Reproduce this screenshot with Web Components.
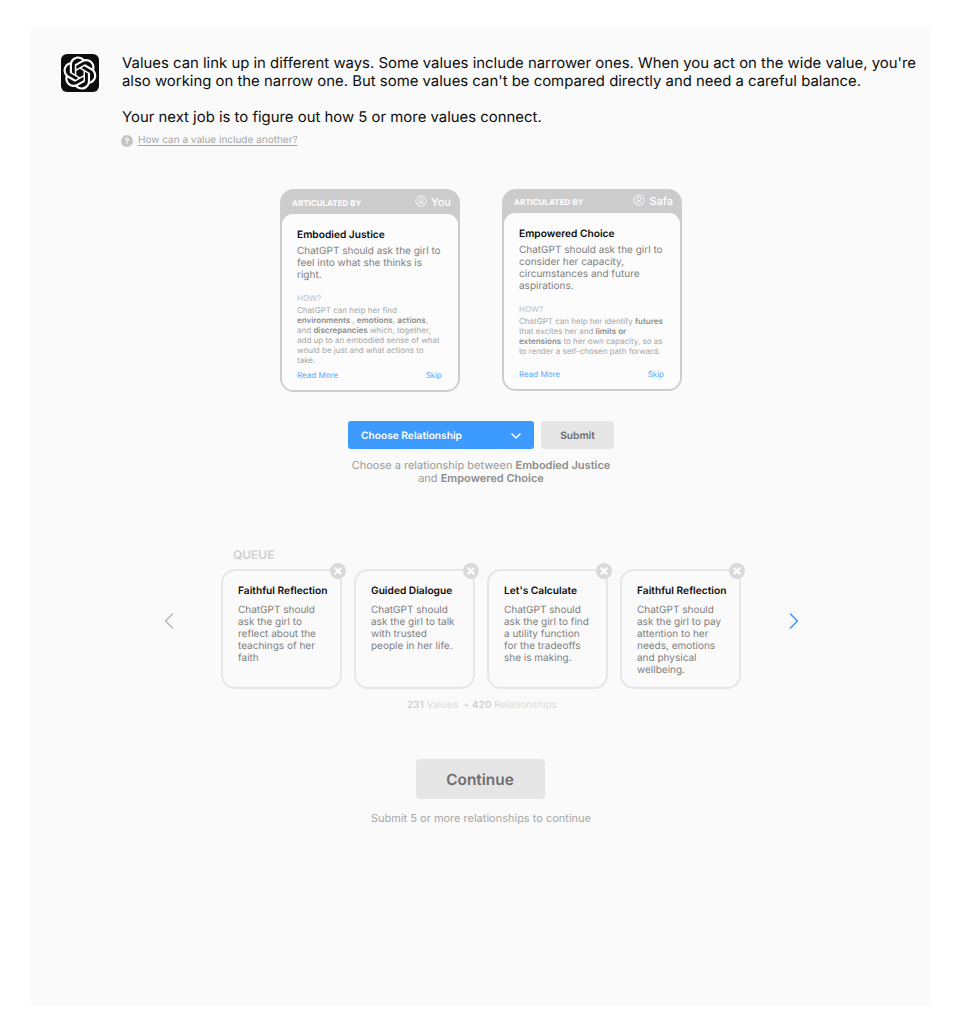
<!DOCTYPE html>
<html>
<head>
<meta charset="utf-8">
<title>Values</title>
<style>
* { box-sizing: border-box; }
html, body { margin: 0; padding: 0; background: #fff; }
body { font-family: Inter, "Liberation Sans", sans-serif; text-rendering: geometricPrecision; }
</style>
</head>
<body>
<values-page></values-page>

<script>
const valueCardTemplate = document.createElement('template')
valueCardTemplate.innerHTML = `
<style>
* { box-sizing: border-box; }
:host {
	display: block;
	width: 180px;
	background: #cccccc;
	border: 2px solid #cccccc;
	border-radius: 14px;
}
.head {
	display: flex;
	align-items: center;
	justify-content: space-between;
	height: var(--head-height, 23px);
	padding: 0 7px 2px 10px;
	color: #fff;
}
.by { margin-top: 2px; font-size: 8px; font-weight: 700; }
.who { display: flex; align-items: center; gap: 4px; font-size: 11px; font-weight: 500; }
.who svg { display: block; width: 12px; height: 12px; margin-top: -2px; }
.body {
	display: flex;
	flex-direction: column;
	background: #fcfcfc;
	border-radius: 11px;
	padding: 15px 16px 9px 15px;
	height: var(--body-height, 176px);
}
.title { font-size: 10.2px; font-weight: 600; line-height: 13px; color: #0d0d0d; }
.desc { margin-top: 3px; font-size: 10px; line-height: 12px; color: #808080; }
.how-label { margin-top: 12px; font-size: 8px; font-weight: 500; line-height: 11px; color: #c8c8c8; }
.how { margin-top: 1px; font-size: 8px; line-height: 10px; color: #a6a6a6; }
.links { margin-top: auto; display: flex; justify-content: space-between; font-size: 8px; line-height: 11px; color: #5aa9ff; }
</style>
<div class="head">
	<span class="by">ARTICULATED BY</span>
	<span class="who">
		<svg viewBox="0 0 24 24" fill="none" stroke="#fff" stroke-width="1.6">
			<circle cx="12" cy="12" r="10.5"/>
			<circle cx="12" cy="9.5" r="4"/>
			<path d="M5 19.5c1.5-3 4-4.2 7-4.2s5.500 1.200 7 4.200"/>
		</svg>
		<span class="name"></span>
	</span>
</div>
<div class="body">
	<div class="title"><slot name="title"></slot></div>
	<div class="desc"><slot name="desc"></slot></div>
	<div class="how-label">HOW?</div>
	<div class="how"><slot name="how"></slot></div>
	<div class="links"><span>Read More</span><span>Skip</span></div>
</div>
`
class ValueCard extends HTMLElement {
	constructor() {
		super()
		this.attachShadow({ mode: 'open' })
		this.shadowRoot.appendChild(valueCardTemplate.content.cloneNode(true))
		this.shadowRoot.querySelector('.name').textContent = this.getAttribute('author')
	}
}
customElements.define('value-card', ValueCard)

const queueCardTemplate = document.createElement('template')
queueCardTemplate.innerHTML = `
<style>
* { box-sizing: border-box; }
:host {
	display: block;
	position: relative;
	width: 121px;
	height: 120px;
	border: 2px solid #e6e6e6;
	border-radius: 14px;
	padding: 14px 15px 0 15px;
}
.title { font-size: 10.2px; font-weight: 600; line-height: 13px; color: #0d0d0d; white-space: nowrap; }
.desc { margin-top: 6px; font-size: 10px; line-height: 12px; color: #808080; }
.close {
	position: absolute;
	top: -8px;
	right: -6px;
	width: 16px;
	height: 16px;
	border-radius: 50%;
	background: #d9d9d9;
}
.close svg { display: block; width: 16px; height: 16px; }
</style>
<div class="title"><slot name="title"></slot></div>
<div class="desc"><slot></slot></div>
<div class="close">
	<svg viewBox="0 0 16 16" fill="none" stroke="#fff" stroke-width="2" stroke-linecap="round"><path d="M5.200 5.200l5.600 5.600M10.800 5.200l-5.600 5.600"/></svg>
</div>
`
class QueueCard extends HTMLElement {
	constructor() {
		super()
		this.attachShadow({ mode: 'open' })
		this.shadowRoot.appendChild(queueCardTemplate.content.cloneNode(true))
	}
}
customElements.define('queue-card', QueueCard)

const grayButtonTemplate = document.createElement('template')
grayButtonTemplate.innerHTML = `
<style>
:host {
	display: flex;
	align-items: center;
	justify-content: center;
	background: #e6e6e6;
	border-radius: 4px;
	color: #6e6e6e;
	font-weight: 600;
}
</style>
<slot></slot>
`
class GrayButton extends HTMLElement {
	constructor() {
		super()
		this.attachShadow({ mode: 'open' })
		this.shadowRoot.appendChild(grayButtonTemplate.content.cloneNode(true))
	}
}
customElements.define('gray-button', GrayButton)

const relationSelectTemplate = document.createElement('template')
relationSelectTemplate.innerHTML = `
<style>
:host {
	display: flex;
	align-items: center;
	justify-content: space-between;
	width: 186px;
	height: 28px;
	padding: 2px 13px 0;
	background: #3d9bff;
	border-radius: 3px;
	color: #fff;
	font-size: 10.2px;
	font-weight: 600;
}
svg { display: block; width: 10px; height: 6px; }
</style>
<slot></slot>
<svg viewBox="0 0 10 6" fill="none" stroke="#fff" stroke-width="1.500" stroke-linecap="round" stroke-linejoin="round"><path d="M1 1l4 4 4-4"/></svg>
`
class RelationSelect extends HTMLElement {
	constructor() {
		super()
		this.attachShadow({ mode: 'open' })
		this.shadowRoot.appendChild(relationSelectTemplate.content.cloneNode(true))
	}
}
customElements.define('relation-select', RelationSelect)

const pageTemplate = document.createElement('template')
pageTemplate.innerHTML = `
<style>
* { box-sizing: border-box; }
:host { display: block; height: 1033px; padding: 27px 31px; background: #fff; }
.panel { height: 979px; background: #fafafa; display: flex; flex-direction: column; }
.intro { display: flex; padding: 27px 14px 0 30px; }
.logo { flex: none; width: 38px; height: 38px; background: #0d0d0d; border-radius: 6px; display: flex; align-items: center; justify-content: center; }
.logo svg { display: block; width: 34px; height: 34px; }
.copy { margin-left: 23px; color: #0d0d0d; font-size: 14.9px; line-height: 18px; }
.copy p { margin: 0 0 18px; }
.copy p:last-of-type { margin: 0; }
.help { display: flex; align-items: center; gap: 5px; margin: 7px 0 0 -1px; font-size: 10px; line-height: 15px; color: #a6a6a6; }
.help span { text-decoration: underline; text-underline-offset: 2px; }
.help svg { display: block; width: 12px; height: 12px; }
.cards { display: flex; justify-content: center; align-items: flex-start; gap: 42px; margin: 41px 0 0; }
.actions { display: flex; justify-content: center; gap: 7px; margin-top: 29px; }
.actions gray-button { width: 73px; padding-top: 2px; font-size: 10.2px; }
.hint { margin-top: 10px; text-align: center; font-size: 11px; line-height: 13px; color: #999; }
.hint b { font-weight: 600; color: #8c8c8c; }
value-card b { font-weight: 600; color: #8c8c8c; }
.queue { width: 520px; margin: 62px auto 0; position: relative; }
.queue-label { padding-left: 12px; font-size: 12px; font-weight: 600; line-height: 15px; color: #d0d0d0; }
.queue-row { display: flex; gap: 12px; margin-top: 7px; }
.arrow { position: absolute; top: 66px; width: 10px; height: 16px; }
.arrow.prev { left: -57px; }
.arrow.next { right: -58px; }
.stats { margin-top: 9px; padding-left: 2px; text-align: center; font-size: 10px; line-height: 14px; color: #dadada; }
.stats b { font-weight: 600; color: #d0d0d0; }
.continue { width: 129px; height: 40px; margin: 47px auto 0; font-size: 15.4px; position: relative; left: -1px; }
.foot { margin-top: 12px; text-align: center; font-size: 11px; line-height: 14px; color: #a6a6a6; }
</style>
<main class="panel">
	<section class="intro">
		<div class="logo">
			<svg viewBox="0 0 41 41" fill="#fff"><path d="M37.5324 16.8707C37.9808 15.5241 38.1363 14.0974 37.9886 12.6859C37.8409 11.2744 37.3934 9.91076 36.676 8.68622C35.6126 6.83404 33.9882 5.3676 32.0373 4.4985C30.0864 3.62941 27.9098 3.40259 25.8215 3.85078C24.8796 2.7893 23.7219 1.94125 22.4257 1.36341C21.1295 0.785575 19.7249 0.491269 18.3058 0.500197C16.1708 0.495044 14.0893 1.16803 12.3614 2.42214C10.6335 3.67624 9.34853 5.44666 8.6917 7.47815C7.30085 7.76286 5.98686 8.3414 4.8377 9.17505C3.68854 10.0087 2.73073 11.0782 2.02839 12.312C0.956464 14.1591 0.498905 16.2988 0.721698 18.4228C0.944492 20.5467 1.83612 22.5449 3.268 24.1293C2.81966 25.4759 2.66413 26.9026 2.81182 28.3141C2.95951 29.7256 3.40701 31.0892 4.12437 32.3138C5.18791 34.1659 6.8123 35.6322 8.76321 36.5013C10.7141 37.3704 12.8907 37.5973 14.9789 37.1492C15.9208 38.2107 17.0786 39.0587 18.3747 39.6366C19.6709 40.2144 21.0755 40.5087 22.4946 40.4998C24.6307 40.5054 26.7133 39.8321 28.4418 38.5772C30.1704 37.3223 31.4556 35.5506 32.1119 33.5179C33.5027 33.2332 34.8167 32.6547 35.9659 31.821C37.115 30.9874 38.0728 29.9178 38.7752 28.684C39.8458 26.8371 40.3023 24.6979 40.0789 22.5748C39.8556 20.4517 38.9639 18.4544 37.5324 16.8707ZM22.4978 37.8849C20.7443 37.8874 19.0459 37.2733 17.6994 36.1501C17.7601 36.117 17.8666 36.0586 17.936 36.0161L25.9004 31.4156C26.1003 31.3019 26.2663 31.137 26.3813 30.9378C26.4964 30.7386 26.5563 30.5124 26.5549 30.2825V19.0542L29.9213 20.998C29.9389 21.0068 29.9541 21.0198 29.9656 21.0359C29.977 21.052 29.9842 21.0707 29.9867 21.0902V30.3889C29.9842 32.375 29.1946 34.2791 27.7909 35.6841C26.3872 37.0892 24.4838 37.8806 22.4978 37.8849ZM6.39227 31.0064C5.51397 29.4888 5.19742 27.7107 5.49804 25.9832C5.55718 26.0187 5.66048 26.0818 5.73461 26.1244L13.699 30.7248C13.8975 30.8408 14.1233 30.902 14.3532 30.902C14.583 30.902 14.8088 30.8408 15.0073 30.7248L24.731 25.1103V28.9979C24.7321 29.0177 24.7283 29.0376 24.7199 29.0556C24.7115 29.0736 24.6988 29.0893 24.6829 29.1012L16.6317 33.7497C14.9096 34.7416 12.8643 35.0097 10.9447 34.4954C9.02506 33.9811 7.38785 32.7263 6.39227 31.0064ZM4.29707 13.6194C5.17156 12.0998 6.55279 10.9364 8.19885 10.3327C8.19885 10.4013 8.19491 10.5228 8.19491 10.6071V19.808C8.19351 20.0378 8.25334 20.2638 8.36823 20.4629C8.48312 20.6619 8.64893 20.8267 8.84863 20.9404L18.5723 26.5542L15.206 28.4979C15.1894 28.5089 15.1703 28.5155 15.1505 28.5173C15.1307 28.5191 15.1107 28.516 15.0924 28.5082L7.04046 23.8557C5.32135 22.8601 4.06716 21.2235 3.55289 19.3046C3.03862 17.3858 3.30624 15.3413 4.29707 13.6194ZM31.955 20.0556L22.2312 14.4411L25.5976 12.4981C25.6142 12.4872 25.6333 12.4805 25.6531 12.4787C25.6729 12.4769 25.6928 12.4801 25.7111 12.4879L33.7631 17.1364C34.9967 17.849 36.0017 18.8982 36.6606 20.1613C37.3194 21.4244 37.6047 22.849 37.4832 24.2684C37.3617 25.6878 36.8382 27.0432 35.9743 28.1759C35.1103 29.3086 33.9415 30.1717 32.6047 30.6641C32.6047 30.5947 32.6047 30.4733 32.6047 30.3889V21.188C32.6066 20.9586 32.5474 20.7328 32.4332 20.5338C32.319 20.3348 32.154 20.1698 31.955 20.0556ZM35.3055 15.0128C35.2464 14.9765 35.1431 14.9142 35.069 14.8717L27.1045 10.2712C26.906 10.1554 26.6803 10.0943 26.4504 10.0943C26.2206 10.0943 25.9948 10.1554 25.7963 10.2712L16.0726 15.8858V11.9982C16.0715 11.9783 16.0753 11.9585 16.0837 11.9405C16.0921 11.9225 16.1048 11.9068 16.1207 11.8949L24.1719 7.25025C25.4053 6.53903 26.8158 6.19376 28.2383 6.25482C29.6608 6.31589 31.0364 6.78077 32.2044 7.59508C33.3723 8.40939 34.2842 9.53945 34.8334 10.8531C35.3826 12.1667 35.5464 13.6095 35.3055 15.0128ZM14.2424 21.9419L10.8752 19.9981C10.8576 19.9893 10.8423 19.9763 10.8309 19.9602C10.8195 19.9441 10.8122 19.9254 10.8098 19.9058V10.6071C10.8107 9.18295 11.2173 7.78848 11.9819 6.58696C12.7466 5.38544 13.8377 4.42659 15.1275 3.82264C16.4173 3.21869 17.8524 2.99464 19.2649 3.1767C20.6775 3.35876 22.0089 3.93941 23.1034 4.85067C23.0427 4.88379 22.937 4.94215 22.8668 4.98473L14.9024 9.58517C14.7025 9.69878 14.5366 9.86356 14.4215 10.0626C14.3065 10.2616 14.2466 10.4877 14.2479 10.7175L14.2424 21.9419ZM16.071 17.9991L20.4018 15.4978L24.7325 17.9975V22.9985L20.4018 25.4983L16.071 22.9985V17.9991Z"/></svg>
		</div>
		<div class="copy">
			<p>Values can link up in different ways. Some values include narrower ones. When you act on the wide value, you're also working on the narrow one. But some values can't be compared directly and need a careful balance.</p>
			<p>Your next job is to figure out how 5 or more values connect.</p>
			<div class="help">
				<svg viewBox="0 0 12 12"><circle cx="6" cy="6" r="6" fill="#c4c4c4"/><text x="6" y="9" text-anchor="middle" font-size="8.500" font-weight="700" fill="#fafafa">?</text></svg>
				<span>How can a value include another?</span>
			</div>
		</div>
	</section>

	<section class="cards">
		<value-card author="You">
			<span slot="title">Embodied Justice</span>
			<span slot="desc">ChatGPT should ask the girl to feel into what she thinks is right.</span>
			<span slot="how">ChatGPT can help her find <b>environments</b> , <b>emotions</b>, <b>actions</b>, and <b>discrepancies</b> which, together, add up to an embodied sense of what would be just and what actions to take.</span>
		</value-card>
		<value-card author="Safa" style="--head-height: 22px">
			<span slot="title">Empowered Choice</span>
			<span slot="desc">ChatGPT should ask the girl to consider her capacity, circumstances and future aspirations.</span>
			<span slot="how">ChatGPT can help her identify <b>futures</b> that excites her and <b>limits or extensions</b> to her own capacity, so as to render a self-chosen path forward.</span>
		</value-card>
	</section>

	<section class="actions">
		<relation-select>Choose Relationship</relation-select>
		<gray-button>Submit</gray-button>
	</section>
	<div class="hint">Choose a relationship between <b>Embodied Justice</b><br>and <b>Empowered Choice</b></div>

	<section class="queue">
		<div class="queue-label">QUEUE</div>
		<div class="queue-row">
			<queue-card><span slot="title">Faithful Reflection</span>ChatGPT should ask the girl to reflect about the teachings of her faith</queue-card>
			<queue-card><span slot="title">Guided Dialogue</span>ChatGPT should ask the girl to talk with trusted people in her life.</queue-card>
			<queue-card><span slot="title">Let's Calculate</span>ChatGPT should ask the girl to find a utility function for the tradeoffs she is making.</queue-card>
			<queue-card><span slot="title">Faithful Reflection</span>ChatGPT should ask the girl to pay attention to her needs, emotions and physical wellbeing.</queue-card>
		</div>
		<svg class="arrow prev" viewBox="0 0 10 16" fill="none" stroke="#b3b3b3" stroke-width="1.400" stroke-linecap="round" stroke-linejoin="round"><path d="M8.500 1L1.500 8l7 7"/></svg>
		<svg class="arrow next" viewBox="0 0 10 16" fill="none" stroke="#3d9bff" stroke-width="1.600" stroke-linecap="round" stroke-linejoin="round"><path d="M1.500 1l7 7-7 7"/></svg>
		<div class="stats"><b>231</b> Values &nbsp;• <b>420</b> Relationships</div>
	</section>

	<gray-button class="continue">Continue</gray-button>
	<div class="foot">Submit 5 or more relationships to continue</div>
</main>
`
class ValuesPage extends HTMLElement {
	constructor() {
		super()
		this.attachShadow({ mode: 'open' })
		this.shadowRoot.appendChild(pageTemplate.content.cloneNode(true))
	}
}
customElements.define('values-page', ValuesPage)
</script>
</body>
</html>
